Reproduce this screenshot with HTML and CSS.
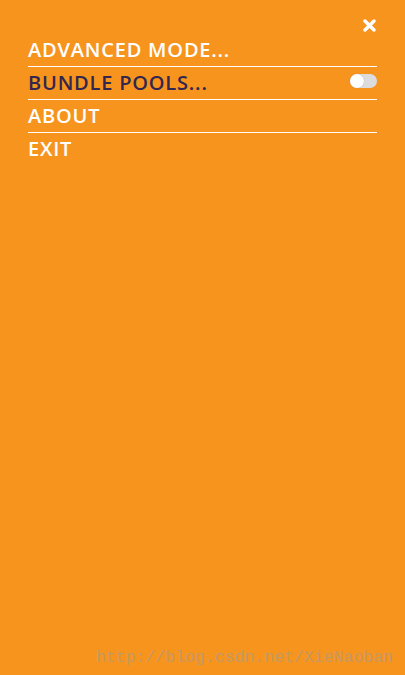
FILE: index.html
```html
<!DOCTYPE html>
<html>
<head>
<meta charset="utf-8">
<link rel="stylesheet" href="styles.css">
</head>
<body>
<nav class="menu">
  <div class="close-row">
    <svg class="close" width="13" height="13" viewBox="0 0 13 13">
      <path d="M2 2 L11 11 M11 2 L2 11" stroke="#fff" stroke-width="3.4" stroke-linecap="round"/>
    </svg>
  </div>
  <ul class="items">
    <li class="item">ADVANCED MODE...</li>
    <li class="item item-active">BUNDLE POOLS...<span class="toggle"><span class="knob"></span></span></li>
    <li class="item">ABOUT</li>
    <li class="item item-last">EXIT</li>
  </ul>
</nav>
<div class="watermark">http://blog.csdn.net/XieNaoban</div>
</body>
</html>
```
FILE: styles.css
```css
html, body {
  margin: 0;
  padding: 0;
  height: 100%;
}
body {
  background: #f7941e;
  font-family: "Open Sans", "Liberation Sans", sans-serif;
  position: relative;
  overflow: hidden;
}
.menu {
  padding: 0 28px;
}
.close-row {
  height: 34px;
  display: flex;
  justify-content: flex-end;
  align-items: flex-start;
}
.close {
  margin-top: 19px;
  margin-right: 1px;
}
.items {
  list-style: none;
  margin: 0;
  padding: 0;
}
.item {
  height: 32px;
  line-height: 32px;
  font-size: 20px;
  font-weight: 600;
  letter-spacing: 0.8px;
  color: #fff;
  border-bottom: 1px solid #fff;
  display: flex;
  align-items: flex-start;
  justify-content: space-between;
  white-space: nowrap;
}
.item-active {
  color: #33264f;
}
.item-last {
  border-bottom: none;
}
.toggle {
  width: 27px;
  height: 14px;
  border-radius: 7px;
  background: #dcdcdc;
  position: relative;
  margin-top: 7px;
}
.knob {
  position: absolute;
  left: 0;
  top: 0;
  width: 14px;
  height: 14px;
  border-radius: 50%;
  background: #fff;
  box-shadow: 0 0 1px rgba(0,0,0,0.25);
}
.watermark {
  position: absolute;
  right: 12px;
  bottom: 8px;
  font-family: "Liberation Mono", monospace;
  font-size: 16.5px;
  color: #c49a64;
}
```
